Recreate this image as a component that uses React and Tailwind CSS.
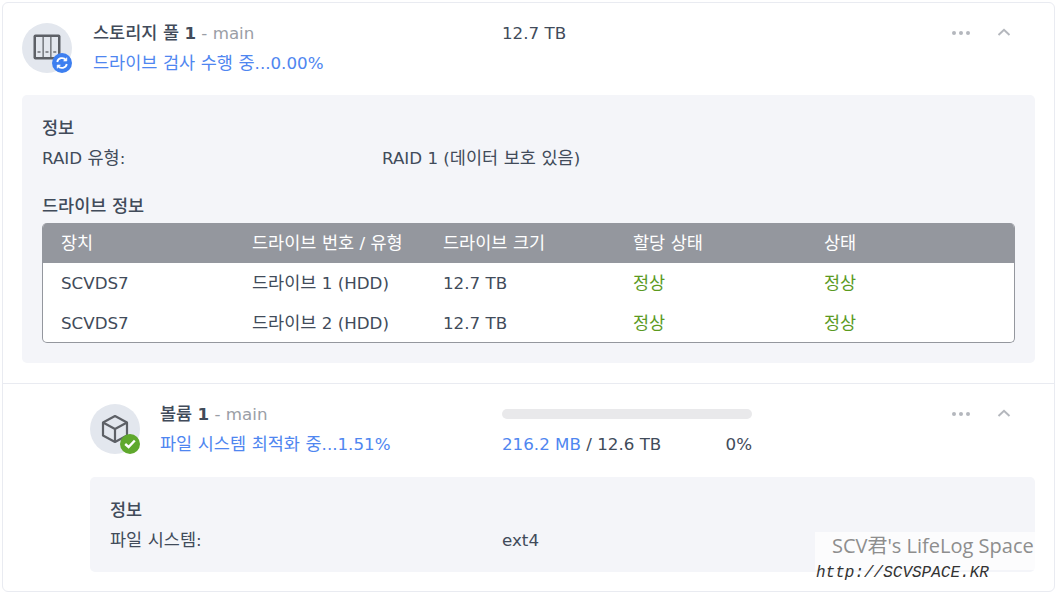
import React from "react";

const FONT = '"DejaVu Sans","Noto Sans CJK KR",sans-serif';

function T({ children }) {
  const parts = String(children).split(/([가-힣]+(?: [가-힣]+)*)/);
  return (
    <>
      {parts.map((p, i) =>
        i % 2 === 1 ? (
          <span key={i} className="text-[17.5px]">
            {p}
          </span>
        ) : (
          p
        )
      )}
    </>
  );
}

function DotsChevron() {
  return (
    <div className="flex items-center gap-[26px] h-[20px] pr-[24px]">
      <svg width="20" height="6" viewBox="0 0 20 6" className="block">
        <circle cx="3" cy="3" r="2" fill="#b4b7bd" />
        <circle cx="10" cy="3" r="2" fill="#b4b7bd" />
        <circle cx="17" cy="3" r="2" fill="#b4b7bd" />
      </svg>
      <svg width="14" height="8" viewBox="0 0 14 8" className="block mb-[3px]">
        <path d="M1.5 7 L7 1.8 L12.5 7" fill="none" stroke="#b4b7bd" strokeWidth="2" />
      </svg>
    </div>
  );
}

function PoolIcon() {
  return (
    <div className="relative w-[50px] h-[50px] rounded-full bg-[#e3e7ee] flex items-center justify-center shrink-0">
      <svg width="28" height="26" viewBox="0 0 28 26" className="mb-[2px] mr-[1px]">
        <rect x="0.5" y="0.5" width="27" height="25" rx="2" fill="#5d6066" />
        <rect x="3" y="3" width="6.5" height="20" fill="#e3e7ee" />
        <rect x="10.75" y="3" width="6.5" height="20" fill="#e3e7ee" />
        <rect x="18.5" y="3" width="6.5" height="20" fill="#e3e7ee" />
        <rect x="4.5" y="17" width="3" height="2" fill="#8b8e94" />
        <rect x="12.5" y="17" width="3" height="2" fill="#8b8e94" />
        <rect x="20.25" y="17" width="3" height="2" fill="#8b8e94" />
      </svg>
      <div className="absolute left-[30px] top-[30px] w-[20px] h-[20px] rounded-full bg-[#3d7ff0] flex items-center justify-center">
        <svg width="14" height="14" viewBox="0 0 14 14" fill="none" stroke="#fff" strokeWidth="1.8">
          <path d="M2.2 6 A5 5 0 0 1 11 4" />
          <path d="M11.8 8 A5 5 0 0 1 3 10" />
          <path d="M11.8 1.5 V5 H8.4" fill="#fff" strokeWidth="0.6" />
          <path d="M2.2 12.5 V9 H5.6" fill="#fff" strokeWidth="0.6" />
        </svg>
      </div>
    </div>
  );
}

function VolumeIcon() {
  return (
    <div className="relative w-[50px] h-[50px] rounded-full bg-[#e3e7ee] flex items-center justify-center shrink-0">
      <svg width="28" height="30" viewBox="0 0 28 30" fill="none" stroke="#5d6066" strokeWidth="2.2" strokeLinejoin="round" className="mb-[1px] mr-[1px]">
        <path d="M14 2 L26 8.5 V21.5 L14 28 L2 21.5 V8.5 Z" />
        <path d="M2 8.5 L14 15 L26 8.5 M14 15 V28" />
      </svg>
      <div className="absolute left-[30px] top-[30px] w-[20px] h-[20px] rounded-full bg-[#5fa82d] flex items-center justify-center">
        <svg width="12" height="10" viewBox="0 0 12 10" fill="none" stroke="#fff" strokeWidth="2.4">
          <path d="M1.2 5 L4.6 8 L10.8 1.5" />
        </svg>
      </div>
    </div>
  );
}

function Row({ cells }) {
  return (
    <div className="flex h-[40px] items-center">
      <div className="w-[209px] pl-[18px]"><T>{cells[0]}</T></div>
      <div className="w-[191px]"><T>{cells[1]}</T></div>
      <div className="w-[190px]"><T>{cells[2]}</T></div>
      <div className="w-[191px] text-[#5b9a1f]"><T>{cells[3]}</T></div>
      <div className="text-[#5b9a1f]"><T>{cells[4]}</T></div>
    </div>
  );
}

export default function App() {
  return (
    <div
      className="relative w-[1057px] h-[594px] bg-white p-[2px] overflow-hidden text-[16.7px] leading-[20px] text-[#414b5a]"
      style={{ fontFamily: FONT }}
    >
      <div className="h-[590px] border border-[#e9ebf1] rounded-[6px] overflow-hidden">
        <section className="h-[381px] border-b border-[#e9ebf1] pt-[20px] pl-[19px] pr-[19px]">
          <div className="flex h-[72px]">
            <PoolIcon />
            <div className="ml-[21px] w-[409px]">
              <div className="h-[30px]">
                <span className="font-medium"><T>스토리지 풀</T> <span className="font-bold">1</span></span>
                <span className="text-[#9a9ea6]"> - main</span>
              </div>
              <div className="text-[#4f86f0]"><T>드라이브 검사 수행 중</T>...0.00%</div>
            </div>
            <div className="flex-1">12.7 TB</div>
            <DotsChevron />
          </div>
          <div className="bg-[#f4f5f9] rounded-[5px] h-[268px] px-[20px] pt-[23px]">
            <div className="font-medium"><T>정보</T></div>
            <div className="flex mt-[10px]">
              <div className="w-[340px]"><T>RAID 유형:</T></div>
              <div>RAID 1 (<T>데이터 보호 있음</T>)</div>
            </div>
            <div className="font-medium mt-[28px]"><T>드라이브 정보</T></div>
            <div className="mt-[7px] h-[120px] rounded-[5px] border border-[#94979e] border-t-0 bg-white overflow-hidden">
              <div className="flex h-[40px] items-center bg-[#94979e] text-white -mx-[1px]">
                <div className="w-[210px] pl-[19px]"><T>장치</T></div>
                <div className="w-[191px]"><T>드라이브 번호 / 유형</T></div>
                <div className="w-[190px]"><T>드라이브 크기</T></div>
                <div className="w-[191px]"><T>할당 상태</T></div>
                <div><T>상태</T></div>
              </div>
              <Row cells={["SCVDS7", "드라이브 1 (HDD)", "12.7 TB", "정상", "정상"]} />
              <Row cells={["SCVDS7", "드라이브 2 (HDD)", "12.7 TB", "정상", "정상"]} />
            </div>
          </div>
        </section>
        <section className="pt-[20px] pl-[87px] pr-[19px]">
          <div className="flex h-[73px]">
            <VolumeIcon />
            <div className="ml-[20px] w-[342px]">
              <div className="h-[30px]">
                <span className="font-medium"><T>볼륨</T> <span className="font-bold">1</span></span>
                <span className="text-[#9a9ea6]"> - main</span>
              </div>
              <div className="text-[#4f86f0]"><T>파일 시스템 최적화 중</T>...1.51%</div>
            </div>
            <div className="w-[250px] pt-[5px]">
              <div className="h-[10px] rounded-full bg-[#e9e9eb]" />
              <div className="flex justify-between mt-[15px]">
                <div>
                  <span className="text-[#4f86f0]">216.2 MB</span> / 12.6 TB
                </div>
                <div>0%</div>
              </div>
            </div>
            <div className="flex-1 flex justify-end">
              <DotsChevron />
            </div>
          </div>
          <div className="bg-[#f4f5f9] rounded-[5px] h-[95px] px-[20px] pt-[23px]">
            <div className="font-medium"><T>정보</T></div>
            <div className="flex mt-[10px]">
              <div className="w-[392px]"><T>파일 시스템:</T></div>
              <div>ext4</div>
            </div>
          </div>
        </section>
      </div>
      <div
        className="absolute left-[815px] top-[532px] w-[220px] h-[38px] bg-white/70 pl-[17px] pt-[2px] text-[20px] leading-[24px] text-[#8e8e8e] whitespace-nowrap"
        style={{ fontFamily: '"Open Sans","Noto Sans CJK KR",sans-serif' }}
      >
        SCV君's LifeLog Space
      </div>
      <div
        className="absolute left-[816px] top-[564px] text-[16px] leading-[18px] italic text-[#333]"
        style={{ fontFamily: '"Liberation Mono",monospace' }}
      >
        http://SCVSPACE.KR
      </div>
    </div>
  );
}
